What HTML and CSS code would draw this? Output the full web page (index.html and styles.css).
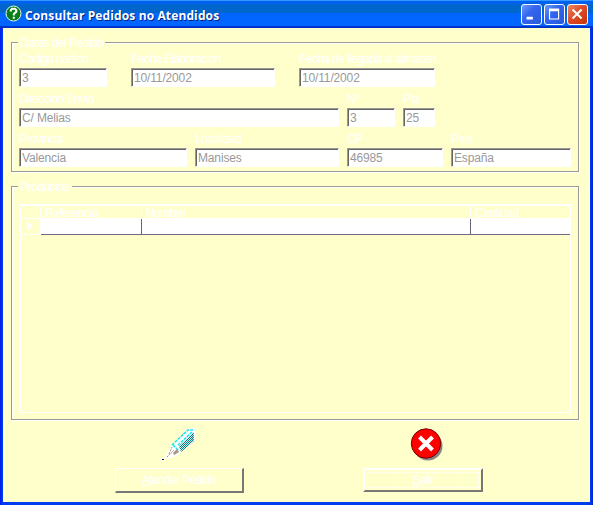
FILE: index.html
```html
<!DOCTYPE html>
<html lang="es">
<head>
<meta charset="utf-8">
<title>Consultar Pedidos no Atendidos</title>
<link rel="stylesheet" href="styles.css">
</head>
<body>
<div class="window">
  <header class="titlebar">
    <svg class="help" width="17" height="17" viewBox="0 0 17 17"><circle cx="8.5" cy="8.5" r="7.5" fill="#087e18" stroke="#e4f5e2" stroke-width="1"/><path d="M5.8 6.4V5.2L7 3.8h3l1.3 1.4v1.6L8.8 9v1.4M8.8 11.7v2" fill="none" stroke="#fff" stroke-width="2"/></svg>
    <h1><span class="title">Consultar Pedidos no Atendidos</span></h1>
    <div class="controls">
      <svg class="control" width="21" height="21" viewBox="0 0 21 21"><path d="M5 14.5h7" stroke="#fff" stroke-width="3"/></svg>
      <svg class="control" width="21" height="21" viewBox="0 0 21 21"><path d="M5 5v10.500h10V5" fill="none" stroke="#fff" stroke-width="1.300"/><path d="M4.400 5.500h11.200" stroke="#fff" stroke-width="3"/></svg>
      <svg class="control close" width="21" height="21" viewBox="0 0 21 21"><path d="M5 5l10 10M15 5L5 15" stroke="#fff" stroke-width="2.200"/></svg>
    </div>
  </header>
  <main>
    <section class="group order">
      <h2 class="legend">Datos del Pedido</h2>
      <div class="row">
        <div class="field code"><label>Codigo pedido</label><div class="input">3</div></div>
        <div class="field made"><label>Fecha Elaboracion</label><div class="input">10/11/2002</div></div>
        <div class="field arrival"><label>Fecha de llegada al almacén</label><div class="input">10/11/2002</div></div>
      </div>
      <div class="row">
        <div class="field address"><label>Dirección Envío</label><div class="input">C/ Melias</div></div>
        <div class="field number"><label>Nº</label><div class="input">3</div></div>
        <div class="field door"><label>Pta</label><div class="input">25</div></div>
      </div>
      <div class="row">
        <div class="field province"><label>Provincia</label><div class="input">Valencia</div></div>
        <div class="field city"><label>Localidad</label><div class="input">Manises</div></div>
        <div class="field postal"><label>CP</label><div class="input">46985</div></div>
        <div class="field country"><label>País</label><div class="input">España</div></div>
      </div>
    </section>
    <section class="group products">
      <h2 class="legend">Productos</h2>
      <div class="table">
        <div class="tr head"><div></div><div>Referencia</div><div>Nombre</div><div>Cantidad</div></div>
        <div class="tr data"><div><svg width="7" height="10" viewBox="0 0 7 10"><path d="M0 0l6 5-6 5z" fill="#fff"/></svg></div><div></div><div></div><div></div></div>
      </div>
    </section>
    <footer>
      <div class="action attend">
        <svg class="pen" width="34" height="34" viewBox="0 0 34 34">
          <defs><pattern id="dots" width="2" height="2" patternUnits="userSpaceOnUse"><path d="M0 0h2v2H0z" fill="#d4eae4"/><path d="M0 0h1v1H0zM1 1h1v1H1z" fill="#008080"/></pattern></defs>
          <path d="M3 31l5-11 18-19 7-1v13L16 27l-8 3z" fill="#fff"/>
          <path d="M32 4v9L19 24l-2-6z" fill="url(#dots)"/>
          <path d="M10 17L26 2h5M16 17L30 4M11 17l6 6" fill="none" stroke="#16e6ed" stroke-width="1.500" stroke-dasharray="3 1"/>
          <path d="M7 26l3-7M5 29l7-7" stroke="#a58a98" stroke-dasharray="2 1"/>
          <path d="M11 25l4-4 2 3-5 3z" fill="#a99584"/>
          <path d="M20 7l2-2M31 5v7" stroke="#879c9a" stroke-dasharray="1 1"/>
          <path d="M0 31.500h2" stroke="#0000b8"/>
        </svg>
        <button><span class="t-attend"><u>A</u>tender Pedido</span></button>
      </div>
      <div class="action exit">
        <svg width="34" height="34" viewBox="0 0 34 34"><circle cx="18" cy="18" r="14.500" fill="#858585"/><circle cx="16" cy="15.500" r="14.700" fill="#f00" stroke="#780000"/><path d="M9.500 9l13 13M22.500 9l-13 13" stroke="#fff" stroke-width="4"/></svg>
        <button class="default"><span class="t-exit"><u>S</u>alir</span></button>
      </div>
    </footer>
  </main>
</div>
</body>
</html>
```
FILE: styles.css
```css
* { box-sizing: border-box; }
body { margin: 0; font: 12px/14px "Liberation Sans", Arial, sans-serif; }
h1, h2 { margin: 0; font-size: inherit; font-weight: normal; }
svg { display: block; }
.window {
  width: 593px;
  height: 505px;
  padding: 0 3px 3px;
  background: linear-gradient(90deg, #001ee8, #003cf0 3px, #003cf0 590px, #0020cf);
}
.titlebar {
  height: 28px;
  display: flex;
  align-items: flex-start;
  margin: 0 -3px;
  padding: 4px 5px 0;
  background: linear-gradient(#3399ff 0 1px, #0060f0 1px 4px, #0066cc 4px 13px, #0066ff 13px 26px, #0033cc 26px);
}
.help { margin-top: 1px; }
h1 {
  flex: 1;
  padding: 4px 0 0 3px;
  color: #fff;
  font: bold 12px/16px "Open Sans", "Noto Sans", sans-serif;
  letter-spacing: .12px;
  text-shadow: 1px 1px #002480;
  white-space: nowrap;
}
.controls { display: flex; gap: 2px; }
.control {
  border: 1px solid #fff;
  border-radius: 3px;
  background: linear-gradient(135deg, #6f9bf8, #3366ee 40%, #2858dc);
}
.control.close { background: linear-gradient(135deg, #ef8968, #dc4c28 45%, #c83408); }
main { height: 474px; padding: 14px 11px 0 8px; background: #ffffcc; }
.group {
  position: relative;
  border: 1px solid #999;
  box-shadow: inset 1px 1px #fff, 1px 1px #fff;
}
.legend {
  position: absolute;
  top: -7px;
  left: 6px;
  padding: 0 2px;
  background: #ffffcc;
  color: #fff;
  letter-spacing: -.5px;
  white-space: nowrap;
}
.order { height: 130px; padding: 9px 7px 0; }
.row { display: flex; gap: 8px; height: 40px; }
.row:first-of-type { gap: 24px; }
.field label {
  display: block;
  height: 16px;
  color: #fff;
  letter-spacing: -.6px;
  white-space: nowrap;
}
.input {
  height: 19px;
  padding: 1px 2px;
  border: 1px solid #fff;
  border-top-color: #999;
  border-left-color: #999;
  box-shadow: inset 1px 1px #666;
  background: #fff;
  color: #999;
  line-height: 17px;
  letter-spacing: -.15px;
}
.code { width: 88px; }
.made { width: 144px; }
.arrival { width: 136px; }
.address { width: 320px; }
.number { width: 48px; }
.door { width: 32px; }
.province { width: 168px; }
.city { width: 144px; }
.postal { width: 96px; }
.country { width: 120px; }
.products { height: 234px; margin-top: 14px; padding: 17px 7px 6px 8px; }
.table { height: 209px; border: 1px solid #fff; border-top-width: 2px; }
.tr { display: grid; grid-template-columns: 20px 101px 329px 1fr; }
.head { height: 12px; color: #fff; line-height: 14px; letter-spacing: -.55px; }
.head div { padding-left: 4px; border-right: 1px solid #fff; }
.data { height: 17px; border-top: 1px solid #fff; }
.data div { background: #fff; border-bottom: 1px solid #776688; border-right: 1px solid #667; }
.data div:first-child { padding: 2px 0 0 6px; background: #ffffcc; border-color: #fff; }
.data div:last-child { border-right: 0; }
footer { display: flex; align-items: flex-start; padding: 8px 0 0 104px; }
.action { display: flex; flex-direction: column; align-items: center; gap: 6px; }
.attend { width: 129px; }
.pen { margin-right: 1px; }
.exit { width: 120px; margin-left: 119px; }
.exit svg { margin-left: 7px; }
button {
  width: 100%;
  height: 25px;
  padding: 0 0 1px;
  border: 1px solid #fff;
  border-right: 2px solid #777;
  border-bottom: 2px solid #777;
  background: #ffffcc;
  color: #fff;
  font: inherit;
}
.t-attend, .t-exit { letter-spacing: -.6px; }
.default { height: 24px; outline: 1px dashed #fff; outline-offset: -5px; border-width: 2px; }
```
